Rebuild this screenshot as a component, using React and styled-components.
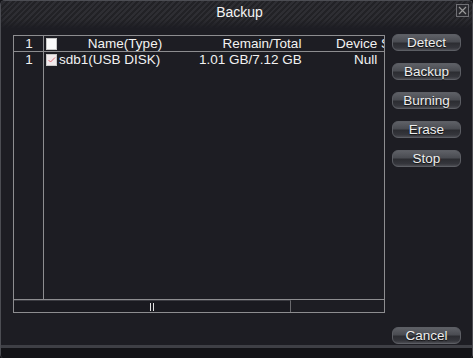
// 백업 창 (DVR 스타일)

import React, { useState } from "react";
import styled, { createGlobalStyle } from "styled-components";

const GlobalStyle = createGlobalStyle`
  html, body {
    margin: 0;
    padding: 0;
    background: #141418;
  }
  body {
    font-family: "Liberation Sans", Arial, sans-serif;
    font-size: 13.5px;
    color: #f2f2f2;
  }
`;

const devices = [
  { id: 1, name: "sdb1(USB DISK)", remain: "1.01 GB/7.12 GB", device: "Null", checked: true },
];

const sideButtons = ["Detect", "Backup", "Burning", "Erase", "Stop"];

const App = () => {
  const [list, setList] = useState(devices);

  const toggle = (id) => {
    setList(list.map((d) => (d.id === id ? { ...d, checked: !d.checked } : d)));
  };

  return (
    <>
      <GlobalStyle />
      <Window>
        <TitleBar>
          <span />
          <Title>Backup</Title>
          <CloseBox>
            <svg width="9" height="9" viewBox="0 0 9 9">
              <path d="M1 1L8 8M8 1L1 8" stroke="#9a9a9a" strokeWidth="1.2" />
            </svg>
          </CloseBox>
        </TitleBar>

        <Content>
          <Main>
            <Table>
              <HeadRow>
                <IndexCell>1</IndexCell>
                <CheckCell>
                  <Check />
                </CheckCell>
                <Cell $w={134} $align="center">Name(Type)</Cell>
                <Cell $w={140} $align="center">Remain/Total</Cell>
                <Cell $pad={4}>Device Status</Cell>
              </HeadRow>

              <Rows>
                {list.map((d) => (
                  <Row key={d.id}>
                    <IndexCell>{d.id}</IndexCell>
                    <CheckCell onClick={() => toggle(d.id)}>
                      <Check $tinted={d.checked}>
                        {d.checked && (
                          <svg width="9" height="9" viewBox="0 0 9 9">
                            <path
                              d="M1.5 5L3.5 7L8 2.5"
                              stroke="#dc5c68"
                              strokeWidth="0.9"
                              fill="none"
                            />
                          </svg>
                        )}
                      </Check>
                    </CheckCell>
                    <Cell $w={134} $pad={1}>{d.name}</Cell>
                    <Cell $w={140} $pad={7}>{d.remain}</Cell>
                    <Cell $pad={22}>{d.device}</Cell>
                  </Row>
                ))}
                <Filler>
                  <IndexCell />
                </Filler>
              </Rows>

              <ScrollBar>
                <Thumb>
                  <Grip />
                </Thumb>
              </ScrollBar>
            </Table>

            <Side>
              {sideButtons.map((b) => (
                <Button key={b}>{b}</Button>
              ))}
            </Side>
          </Main>

          <Footer>
            <Button>Cancel</Button>
          </Footer>
        </Content>

        <BottomBar />
      </Window>
    </>
  );
};

export default App;

const Window = styled.div`
  width: 473px;
  height: 358px;
  box-sizing: border-box;
  display: flex;
  flex-direction: column;
  background: #1d1d23;
  border: 1px solid #4c4d53;
  border-bottom: none;
  border-radius: 5px 5px 4px 4px;
  overflow: hidden;
`;

const TitleBar = styled.div`
  height: 27px;
  display: grid;
  grid-template-columns: 1fr auto 1fr;
  align-items: start;
  background: repeating-linear-gradient(
      135deg,
      #222226 0px,
      #222226 2px,
      #2e2e33 2px,
      #2e2e33 4px
    ),
    #26262a;
  box-shadow: inset 0 -6px 6px -2px #1d1d23;
`;

const Title = styled.div`
  padding: 3px 0 0 6px;
  font-size: 14px;
  line-height: 16px;
  color: #f4f4f4;
`;

const CloseBox = styled.div`
  justify-self: end;
  margin: 3px 3px 0 0;
  width: 13px;
  height: 13px;
  box-sizing: border-box;
  border: 1px solid #707075;
  background: #2a2a2f;
  display: flex;
  align-items: center;
  justify-content: center;
`;

const Content = styled.div`
  flex: 1;
  display: flex;
  flex-direction: column;
  padding: 6px 11px 0 12px;
`;

const Main = styled.div`
  display: flex;
  align-items: flex-start;
  gap: 7px;
`;

const Table = styled.div`
  margin-top: 1px;
  width: 372px;
  height: 278px;
  box-sizing: border-box;
  border: 1px solid #8d8d90;
  display: flex;
  flex-direction: column;
  overflow: hidden;
`;

const HeadRow = styled.div`
  display: flex;
  height: 15px;
  line-height: 15px;
  border-bottom: 1px solid #8d8d90;
  white-space: nowrap;
`;

const Rows = styled.div`
  flex: 1;
  display: flex;
  flex-direction: column;
`;

const Row = styled.div`
  display: flex;
  height: 15px;
  line-height: 15px;
  white-space: nowrap;
`;

const Filler = styled.div`
  flex: 1;
  display: flex;
`;

const IndexCell = styled.div`
  width: 30px;
  flex-shrink: 0;
  box-sizing: border-box;
  border-right: 1px solid #8d8d90;
  padding-left: 1px;
  text-align: center;
`;

const CheckCell = styled.div`
  width: 14px;
  flex-shrink: 0;
  display: flex;
  align-items: center;
  padding-left: 2px;
  box-sizing: border-box;
  cursor: pointer;
`;

const Check = styled.div`
  width: 11px;
  height: 12px;
  box-sizing: border-box;
  background: ${(p) => (p.$tinted ? "#f1eaec" : "#fafafa")};
  border: 1px solid #c8c8c8;
  display: flex;
  align-items: center;
  justify-content: center;
`;

const Cell = styled.div`
  ${(p) => (p.$w ? `width: ${p.$w}px; flex-shrink: 0;` : "flex: 1; min-width: 0;")}
  box-sizing: border-box;
  padding-left: ${(p) => p.$pad || 0}px;
  text-align: ${(p) => p.$align || "left"};
  overflow: hidden;
`;

const ScrollBar = styled.div`
  height: 12px;
  flex-shrink: 0;
  border-top: 1px solid #8d8d90;
  display: flex;
`;

const Thumb = styled.div`
  width: 276px;
  border-right: 1px solid #6a6a6e;
  border-top: 1px solid #3c3c42;
  background: #1a1a20;
  display: flex;
  align-items: center;
  justify-content: center;
`;

const Grip = styled.div`
  width: 2px;
  height: 8px;
  border-left: 1px solid #e0e0e0;
  border-right: 1px solid #e0e0e0;
`;

const Side = styled.div`
  display: flex;
  flex-direction: column;
  gap: 12px;
`;

const Button = styled.div`
  width: 69px;
  height: 17px;
  box-sizing: border-box;
  border: 1px solid #5c5e64;
  border-radius: 6px;
  background: linear-gradient(
    to bottom,
    #5e6066 0%,
    #4a4c52 45%,
    #2c2d32 55%,
    #35363c 85%,
    #4a4b51 100%
  );
  color: #eeeeee;
  font-size: 13.5px;
  line-height: 15px;
  text-align: center;
  text-shadow: 0 1px 1px #111;
  cursor: pointer;
`;

const Footer = styled.div`
  display: flex;
  justify-content: flex-end;
  margin-top: 14px;
`;

const BottomBar = styled.div`
  margin-top: auto;
  height: 10px;
  border-top: 3px solid #3e3f45;
  background: #131317;
`;
